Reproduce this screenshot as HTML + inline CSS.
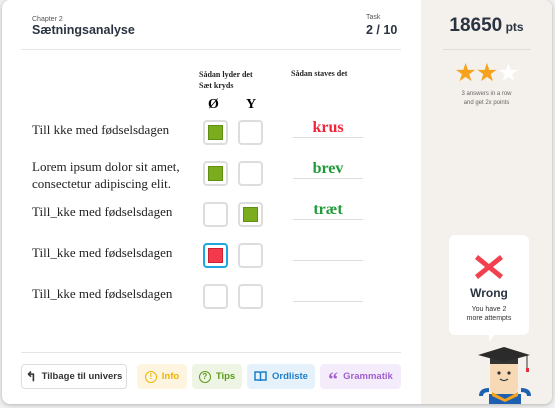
<!DOCTYPE html>
<html><head><meta charset="utf-8"><style>
*{margin:0;padding:0;box-sizing:border-box}
body{width:555px;height:408px;background:#f0f0f0;font-family:"Liberation Sans",sans-serif;position:relative;overflow:hidden}
.card{position:absolute;left:2px;top:0;width:550px;height:404px;background:#fff;border-radius:8px;box-shadow:0 1px 4px rgba(0,0,0,.25);overflow:hidden}
.side{position:absolute;left:419px;top:0;width:131px;height:404px;background:#f4f0ec}
.a{position:absolute}
.serif{font-family:"Liberation Serif",serif}
.box{position:absolute;width:25px;height:25px;border:2px solid #ddd;border-radius:4px;background:#fff}
.box i{position:absolute;left:3px;top:3px;width:15px;height:15px;background:#7aac1e;border:1px solid #5e8f10}
.line{position:absolute;left:291px;width:70px;height:1px;background:#ddd}
.word{position:absolute;left:291px;width:70px;text-align:center;font-family:"Liberation Serif",serif;font-weight:bold;font-size:16px}
.btn{position:absolute;top:364px;height:25px;border-radius:4px;font-size:9.5px;font-weight:bold;display:flex;align-items:center;justify-content:center;gap:5px}
</style></head><body>
<div class="card">
<div class="a" style="left:30px;top:16px;font-size:7px;color:#555">Chapter 2</div>
<div class="a" style="left:30px;top:23px;font-size:12.5px;font-weight:bold;color:#2a3440">Sætningsanalyse</div>
<div class="a" style="left:364px;top:14px;font-size:7px;color:#555">Task</div>
<div class="a" style="left:364px;top:23px;font-size:12.5px;font-weight:bold;color:#2a3440">2 / 10</div>
<div class="a" style="left:19px;top:49px;width:380px;height:1px;background:#e5e5e5"></div>
<div class="a serif" style="left:197px;top:69px;font-size:8px;font-weight:bold;line-height:11px;color:#222">Sådan lyder det<br>Sæt kryds</div>
<div class="a serif" style="left:289px;top:69px;font-size:8px;font-weight:bold;color:#222">Sådan staves det</div>
<div class="a serif" style="left:206px;top:97px;font-size:14px;font-weight:bold">Ø</div>
<div class="a serif" style="left:244px;top:97px;font-size:14px;font-weight:bold">Y</div>

<div class="a serif" style="left:30px;top:122px;font-size:13px;color:#222">Till kke med fødselsdagen</div>
<div class="a serif" style="left:30px;top:158px;font-size:13px;line-height:17px;color:#222">Lorem ipsum dolor sit amet,<br>consectetur adipiscing elit.</div>
<div class="a serif" style="left:30px;top:204px;font-size:13px;color:#222">Till_kke med fødselsdagen</div>
<div class="a serif" style="left:30px;top:245px;font-size:13px;color:#222">Till_kke med fødselsdagen</div>
<div class="a serif" style="left:30px;top:286px;font-size:13px;color:#222">Till_kke med fødselsdagen</div>

<div class="box" style="left:201px;top:120px"><i></i></div><div class="box" style="left:236px;top:120px"></div>
<div class="box" style="left:201px;top:161px"><i></i></div><div class="box" style="left:236px;top:161px"></div>
<div class="box" style="left:201px;top:202px"></div><div class="box" style="left:236px;top:202px"><i></i></div>
<div class="box" style="left:201px;top:243px;border-color:#1ea7e0"><i style="background:#f23a4c;border-color:#d02030"></i></div><div class="box" style="left:236px;top:243px"></div>
<div class="box" style="left:201px;top:284px"></div><div class="box" style="left:236px;top:284px"></div>

<div class="word" style="top:119px;color:#f0253a">krus</div><div class="line" style="top:137px"></div>
<div class="word" style="top:160px;color:#1f9a3a">brev</div><div class="line" style="top:178px"></div>
<div class="word" style="top:201px;color:#1f9a3a">træt</div><div class="line" style="top:219px"></div>
<div class="line" style="top:260px"></div>
<div class="line" style="top:301px"></div>

<div class="a" style="left:19px;top:352px;width:380px;height:1px;background:#e5e5e5"></div>
<div class="btn" style="left:19px;width:106px;border:1px solid #ddd;color:#333"><span style="font-size:13px">↰</span>Tilbage til univers</div>
<div class="btn" style="left:135px;width:50px;background:#fdf5e0;color:#f0b400"><span style="width:12px;height:12px;border:1.5px solid #f0b400;border-radius:50%;font-size:8px;display:flex;align-items:center;justify-content:center">!</span>Info</div>
<div class="btn" style="left:190px;width:50px;background:#eef5e4;color:#5a9a18"><span style="width:12px;height:12px;border:1.5px solid #5a9a18;border-radius:50%;font-size:8px;display:flex;align-items:center;justify-content:center">?</span>Tips</div>
<div class="btn" style="left:245px;width:68px;background:#e6f2fb;color:#1d7ec8"><svg width="13" height="11" viewBox="0 0 13 11"><path d="M1 1h4q1.5 0 1.5 1.5V10q0-1-1.5-1H1zM12 1H8Q6.5 1 6.5 2.5V10q0-1 1.5-1H12z" fill="none" stroke="#1d7ec8" stroke-width="1.5"/></svg>Ordliste</div>
<div class="btn" style="left:318px;width:81px;background:#f5ecfb;color:#a060d0"><span style="font-size:20px;font-family:'Liberation Serif',serif;font-weight:bold;line-height:10px;padding-top:7px">“</span>Grammatik</div>

<div class="side">
<div class="a" style="left:0;width:131px;top:15px;text-align:center;color:#2a3440;font-weight:bold;font-size:19px">18650<span style="font-size:12px"> pts</span></div>
<div class="a" style="left:22px;top:49px;width:88px;height:1px;background:#e2ddd8"></div>
<div class="a" style="left:0;width:131px;text-align:center;top:58px;font-size:25px;color:#f6a21c;letter-spacing:-1px">★★<span style="color:#fff">★</span></div>
<div class="a" style="left:0;width:131px;top:90px;text-align:center;font-size:6px;line-height:9px;color:#666">3 answers in a row<br>and get 2x points</div>
<div class="a" style="left:28px;top:235px;width:80px;height:100px;background:#fff;border-radius:6px"></div>
<div class="a" style="left:68px;top:334px;width:0;height:0;border-left:6px solid #fff;border-bottom:8px solid transparent"></div>
<svg class="a" style="left:53px;top:253px" width="30" height="28" viewBox="0 0 30 28"><path d="M4 2L15 11L26 2L29 6L19 14L29 22L26 26L15 17L4 26L1 22L11 14L1 6Z" fill="#f2404e"/></svg>
<div class="a" style="left:28px;width:80px;top:286px;text-align:center;font-weight:bold;font-size:12px;color:#2a3440">Wrong</div>
<div class="a" style="left:28px;width:80px;top:305px;text-align:center;font-size:7px;line-height:9px;color:#333">You have 2<br>more attempts</div>
<svg class="a" style="left:56px;top:346px" width="56" height="58" viewBox="0 0 56 58">
<rect x="13" y="14" width="28" height="34" rx="6" fill="#f7d9b5"/>
<path d="M12 48h32v10H12z" fill="#1f5fb0"/>
<path d="M15 46l13 7 13-7v4l-13 6-13-6z" fill="#f6a21c"/>
<path d="M4 50q0-6 8-6M52 50q0-6-8-6" stroke="#1f5fb0" stroke-width="4" fill="none"/>
<path d="M13 10h28v8H13z" fill="#333"/>
<path d="M1 9L27 1L53 9L27 16Z" fill="#2b2b2b"/>
<path d="M50 9v14" stroke="#333" stroke-width="1"/><rect x="49" y="22" width="3" height="4" fill="#e03040"/>
<circle cx="22" cy="27" r="1.6" fill="#333"/><circle cx="32" cy="27" r="1.6" fill="#333"/>
<path d="M23 33q4 3 8 0" stroke="#333" stroke-width="1.2" fill="#fff"/>
</svg>
</div>
</div>
</body></html>
